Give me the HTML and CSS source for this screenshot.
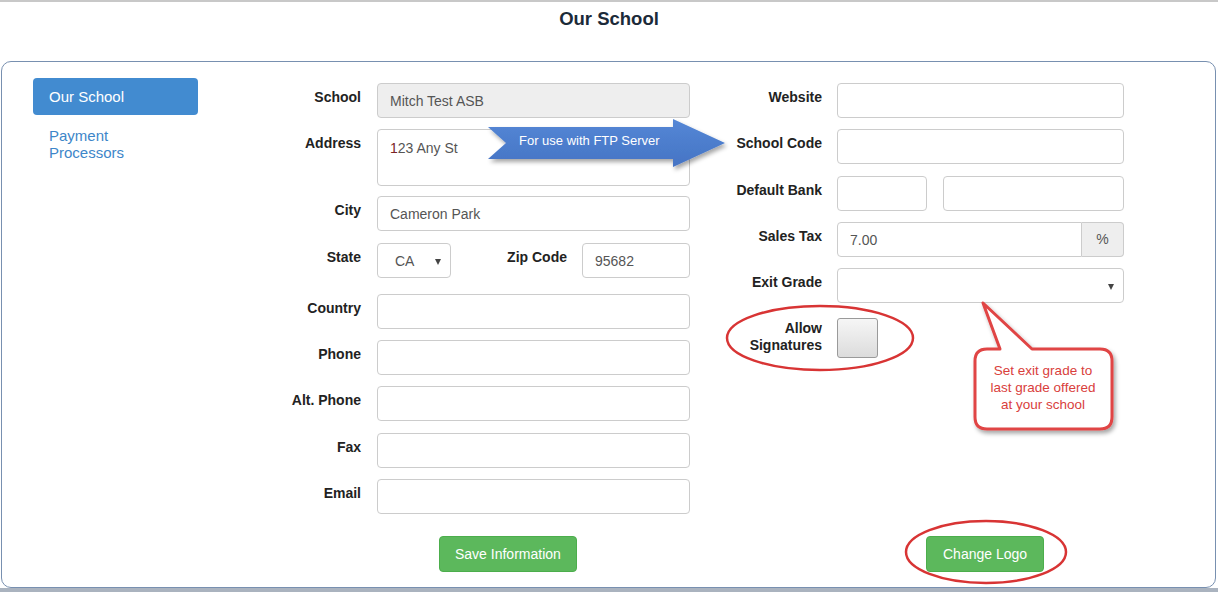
FILE: index.html
```html
<!DOCTYPE html>
<html>
<head>
<meta charset="utf-8">
<title>Our School</title>
<link rel="stylesheet" href="styles.css">
</head>
<body>
<header class="topbar">
  <h1 class="title">Our School</h1>
</header>
<main class="panel">
  <nav class="side-nav">
    <a class="nav-item active">Our School</a>
    <a class="nav-item">Payment Processors</a>
  </nav>
  <section class="form-col left-col">
    <div class="grid left-grid">
      <label class="lbl">School</label>
      <div class="field readonly">Mitch Test ASB</div>

      <label class="lbl">Address</label>
      <div class="field textarea"><span class="cursor1">1</span>23 Any St</div>

      <label class="lbl">City</label>
      <div class="field">Cameron Park</div>

      <label class="lbl">State</label>
      <div class="state-row">
        <div class="field select state-select">CA</div>
        <div class="zip-group">
          <label class="lbl zip-lbl">Zip Code</label>
          <div class="field zip">95682</div>
        </div>
      </div>

      <label class="lbl">Country</label>
      <div class="field"></div>

      <label class="lbl">Phone</label>
      <div class="field"></div>

      <label class="lbl">Alt. Phone</label>
      <div class="field"></div>

      <label class="lbl">Fax</label>
      <div class="field"></div>

      <label class="lbl">Email</label>
      <div class="field"></div>
    </div>
    <div class="btn-row save-row">
      <button class="btn">Save Information</button>
    </div>
  </section>
  <section class="form-col right-col">
    <div class="grid right-grid">
      <label class="lbl">Website</label>
      <div class="field"></div>

      <label class="lbl">School Code</label>
      <div class="field"></div>

      <label class="lbl">Default Bank</label>
      <div class="bank-row">
        <div class="field bank-a"></div>
        <div class="field bank-b"></div>
      </div>

      <label class="lbl">Sales Tax</label>
      <div class="input-group">
        <div class="field group-input">7.00</div>
        <div class="addon">%</div>
      </div>

      <label class="lbl">Exit Grade</label>
      <div class="field select"></div>

      <label class="lbl two-line">Allow<br>Signatures</label>
      <div class="check-wrap"><div class="checkbox"></div></div>
    </div>
    <div class="btn-row logo-row">
      <button class="btn">Change Logo</button>
    </div>
  </section>
</main>
<div class="bottom-band"></div>

<svg class="annotations" width="1218" height="592" viewBox="0 0 1218 592">
  <defs>
    <filter id="shadow" x="-10%" y="-20%" width="130%" height="150%">
      <feDropShadow dx="2" dy="3" stdDeviation="2" flood-color="#000" flood-opacity="0.35"/>
    </filter>
    <linearGradient id="arrowGrad" x1="0" y1="0" x2="0" y2="1">
      <stop offset="0" stop-color="#5587d6"/>
      <stop offset="1" stop-color="#4574c4"/>
    </linearGradient>
  </defs>
  <polygon points="488,127 673,127 673,119 725,143 673,167 673,159 488,159 506,143" fill="url(#arrowGrad)" filter="url(#shadow)"/>
  <text x="519" y="145" class="arrow-text">For use with FTP Server</text>

  <ellipse cx="820" cy="338" rx="93" ry="32" class="ring"/>
  <ellipse cx="986" cy="552" rx="80" ry="31" class="ring"/>

  <path d="M987 349 L1000 349 L983 303 L1032 349 L1100 349 Q1112 349 1112 361 L1112 417 Q1112 429 1100 429 L987 429 Q975 429 975 417 L975 361 Q975 349 987 349 Z" class="bubble" filter="url(#shadow)"/>
  <text x="1043" y="375" class="bubble-text">Set exit grade to</text>
  <text x="1043" y="392" class="bubble-text">last grade offered</text>
  <text x="1043" y="409" class="bubble-text">at your school</text>
</svg>
</body>
</html>
```
FILE: styles.css
```css
* { box-sizing: border-box; }

html, body {
  margin: 0;
  padding: 0;
  background: #ffffff;
}

body {
  width: 1218px;
  height: 592px;
  overflow: hidden;
  position: relative;
  font-family: "Liberation Sans", Arial, sans-serif;
  color: #333;
}

.topbar {
  border-top: 2px solid #c8c8c8;
  height: 61px;
  padding-top: 6px;
}

.title {
  margin: 0;
  text-align: center;
  font-size: 18.5px;
  line-height: 22px;
  font-weight: bold;
  color: #1b2a39;
}

.panel {
  margin-left: 1px;
  width: 1215px;
  height: 527px;
  border: 1px solid #7890b0;
  border-radius: 10px;
  display: flex;
  align-items: stretch;
  padding-top: 16px;
  padding-left: 31px;
}

.side-nav {
  width: 165px;
  display: flex;
  flex-direction: column;
  gap: 12px;
}

.nav-item {
  display: block;
  font-size: 15px;
  line-height: 17px;
  color: #3d86c9;
  padding: 0 16px;
}

.nav-item.active {
  background: #428bd0;
  color: #ffffff;
  border-radius: 4px;
  height: 37px;
  padding-top: 10px;
}

.form-col {
  display: flex;
  flex-direction: column;
  padding-top: 5px;
}

.grid {
  display: grid;
  row-gap: 11.25px;
  align-items: start;
}

.left-grid {
  grid-template-columns: 163px 313px;
  column-gap: 16px;
}

.right-grid {
  grid-template-columns: 132px 287px;
  column-gap: 15px;
}

.lbl {
  display: block;
  text-align: right;
  font-size: 14px;
  line-height: 20px;
  font-weight: bold;
  color: #222;
  padding-top: 4px;
}

.lbl.two-line {
  line-height: 17px;
  padding-top: 6px;
}

.field {
  height: 35px;
  border: 1px solid #cccccc;
  border-radius: 4px;
  background: #fff;
  font-size: 14px;
  line-height: 20px;
  color: #555;
  padding: 7px 12px;
  position: relative;
}

.field.readonly {
  background: #eeeeee;
}

.field.textarea {
  height: 57px;
  padding-top: 8px;
  margin-bottom: -1.25px;
}

.cursor1 {
  color: #7a2323;
}

.state-row {
  display: flex;
  justify-content: space-between;
  margin-bottom: 5px;
}

.state-select {
  width: 74px;
  padding-left: 17px;
}

.field.select::after {
  content: "";
  position: absolute;
  right: 9px;
  top: 15px;
  border-left: 3.5px solid transparent;
  border-right: 3.5px solid transparent;
  border-top: 6px solid #444;
}

.zip-group {
  display: flex;
  gap: 15px;
}

.zip-lbl {
  padding-top: 4px;
}

.field.zip {
  width: 108px;
}

.bank-row {
  display: flex;
  justify-content: space-between;
}

.bank-a { width: 90px; }
.bank-b { width: 181px; }

.input-group {
  display: flex;
}

.group-input {
  flex: 1;
  border-radius: 4px 0 0 4px;
}

.addon {
  width: 42px;
  height: 35px;
  border: 1px solid #cccccc;
  border-left: none;
  border-radius: 0 4px 4px 0;
  background: #eeeeee;
  color: #555;
  font-size: 14px;
  line-height: 33px;
  text-align: center;
}

.check-wrap {
  padding-top: 4px;
}

.checkbox {
  width: 41px;
  height: 40px;
  border: 1px solid #9a9a9a;
  border-radius: 3px;
  background: linear-gradient(#f6f6f6, #dcdcdc);
}

.btn-row {
  margin-top: auto;
  padding-bottom: 15px;
}

.save-row { padding-left: 241px; }
.logo-row { padding-left: 236px; }

.btn {
  height: 36px;
  background: #5cb85c;
  border: 1px solid #4cae4c;
  border-radius: 4px;
  color: #ffffff;
  font-family: "Liberation Sans", Arial, sans-serif;
  font-size: 14px;
  padding: 0 15px;
}

.logo-row .btn {
  padding: 0 16px;
}

.bottom-band {
  height: 4px;
  background: #aab3bf;
}

.annotations {
  position: absolute;
  left: 0;
  top: 0;
  pointer-events: none;
}

.arrow-text {
  font-family: "Liberation Sans", Arial, sans-serif;
  font-size: 13px;
  fill: #ffffff;
}

.ring {
  fill: none;
  stroke: #d83434;
  stroke-width: 2.5;
}

.bubble {
  fill: #ffffff;
  stroke: #e04444;
  stroke-width: 3;
  stroke-linejoin: round;
}

.bubble-text {
  font-family: "Liberation Sans", Arial, sans-serif;
  font-size: 13.5px;
  fill: #d9403c;
  text-anchor: middle;
}
```
